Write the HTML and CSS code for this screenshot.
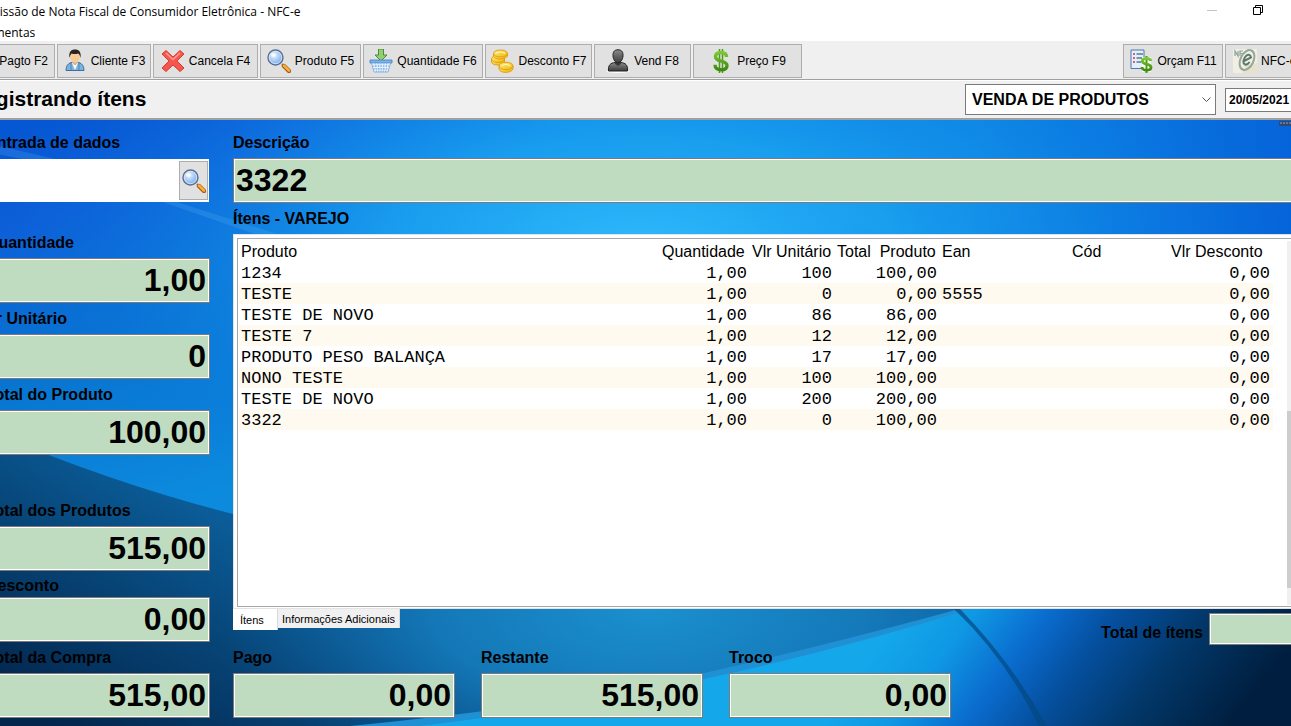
FILE: index.html
```
<!DOCTYPE html>
<html lang="pt-BR">
<head>
<meta charset="utf-8">
<title>Emissão de Nota Fiscal de Consumidor Eletrônica - NFC-e</title>
<link rel="stylesheet" href="styles.css">
</head>
<body>
<svg class="defs" width="0" height="0" aria-hidden="true">
  <defs>
    <radialGradient id="lens" cx=".4" cy=".35" r=".7"><stop offset="0" stop-color="#e8f4ff"/><stop offset=".5" stop-color="#a9cdf5"/><stop offset="1" stop-color="#6fa3e4"/></radialGradient>
    <linearGradient id="coin" x1="0" y1="0" x2="1" y2="1"><stop offset="0" stop-color="#fff08a"/><stop offset="1" stop-color="#f5b400"/></linearGradient>
    <linearGradient id="bust" x1="0" y1="0" x2="0" y2="1"><stop offset="0" stop-color="#8a8a8a"/><stop offset="1" stop-color="#3c3c3c"/></linearGradient>
    <linearGradient id="money" x1="0" y1="0" x2="0" y2="1"><stop offset="0" stop-color="#7cc832"/><stop offset="1" stop-color="#3d8a10"/></linearGradient>
    <symbol id="i-lens" viewBox="0 0 24 24">
      <path d="M15 15l3 3" stroke="#777" stroke-width="2"/>
      <path d="M17 17l5 5" stroke="#a55a10" stroke-width="4.4" stroke-linecap="round"/>
      <path d="M17 16.600l5 5" stroke="#f8b23c" stroke-width="2.600" stroke-linecap="round"/>
      <circle cx="8.500" cy="8.500" r="7.500" fill="url(#lens)" stroke="#5d6f92" stroke-width="1.400"/>
      <circle cx="8.500" cy="8.500" r="6.200" fill="none" stroke="#dcebff" stroke-width=".8"/>
      <ellipse cx="6.500" cy="6" rx="2.600" ry="2" fill="#fff" opacity=".75"/>
    </symbol>
    <symbol id="i-client" viewBox="0 0 24 24">
      <path d="M3 21.500c0-4.500 2-7 5-8l4 1.500 4-1.500c3 1 5 3.500 5 8z" fill="#7db3dc" stroke="#3a6fa0"/>
      <path d="M9 14l3 7 3-7z" fill="#fff"/><path d="M8 14v7M16 14v7" stroke="#4c87b8" stroke-width="1"/>
      <path d="M10 11h4v4l-2 1.500-2-1.500z" fill="#e9b27c"/>
      <ellipse cx="12" cy="8" rx="4.800" ry="5.500" fill="#f7cb98"/>
      <path d="M6.500 9C5.500 3 8 .5 12 .5S18.500 3 17.500 9c-.7-3-1.400-4-2.300-4.500-2 .8-5 .8-6.600 0-.8.7-1.500 2-2.100 4.500z" fill="#2b2320"/>
    </symbol>
    <symbol id="i-cancel" viewBox="0 0 24 24">
      <path d="M5 1.500l7 6.500 7-6.500 4 3.500-7 7 7 7-4 3.500-7-6.500-7 6.500L1 19l7-7-7-7z" fill="#f4574d" stroke="#d63a34"/>
      <path d="M5 4l7 6.500L19 4" fill="none" stroke="#ff9c90" stroke-width="1.500"/>
    </symbol>
    <symbol id="i-basket" viewBox="0 0 24 24">
      <path d="M9.500 0h5v6h3.500l-6 6-6-6h3.500z" fill="#92cf74" stroke="#4c8a38"/>
      <path d="M1 11h22v3H1z" fill="#7cb5ea" stroke="#3c7cc0" stroke-width=".8"/>
      <path d="M2.500 14h19l-2.500 9H5z" fill="#eaf4ff" stroke="#6fa5dc" stroke-width=".8"/>
      <path d="M4 17h16M4.500 20h15M6 14l1.500 9M9 14l.8 9M12 14v9M15 14l-.8 9M18 14l-1.500 9" stroke="#7fb0e2" stroke-width="1" stroke-dasharray="1.500 1"/>
    </symbol>
    <symbol id="i-coins" viewBox="0 0 24 24">
      <g fill="url(#coin)" stroke="#d99a10" stroke-width=".9">
        <path d="M1.500 10v3c1 4 11 4 13 0v-3z"/><ellipse cx="8" cy="10" rx="6.500" ry="3.500"/>
        <path d="M3.500 4.500V7c1 4 12 4 14 0V4.500z"/><ellipse cx="10.500" cy="4.500" rx="7" ry="3.500"/>
        <path d="M9 17v3c1 4.500 12 4.500 14 0v-3z"/><ellipse cx="16" cy="17" rx="7" ry="3.800"/>
      </g>
      <path d="M6 4.500c1-2 7-2 9 0M12 17c1-2 6-2 8 0" fill="none" stroke="#fffac8" stroke-width="1.200"/>
    </symbol>
    <symbol id="i-seller" viewBox="0 0 24 24">
      <ellipse cx="12" cy="22.500" rx="11.500" ry="1.500" fill="#fff"/>
      <path d="M2.500 22c-.5-6 2-8 6.500-8.500h6c4.500.5 7 2.500 6.500 8.500z" fill="url(#bust)" stroke="#222"/>
      <path d="M9 12h6v3l-3 2-3-2z" fill="#3a3a3a"/>
      <path d="M12 .8c4 0 5.200 2.500 5 6-.2 4-2.500 7-5 7s-4.800-3-5-7c-.2-3.500 1-6 5-6z" fill="url(#bust)" stroke="#222"/>
    </symbol>
    <symbol id="i-dollar" viewBox="0 0 24 24">
      <path d="M10.500 0v24M13.500 0v24" stroke="#4b9a1c" stroke-width="1.500"/>
      <path d="M17.500 8c0-3.500-2.200-4.500-5.500-4.500S6.500 5 6.500 7.800c0 5.600 11.500 3 11.500 8.600 0 3-2.700 4.300-6 4.300s-6-1-6-4.900" fill="none" stroke="url(#money)" stroke-width="3.400"/>
    </symbol>
    <symbol id="i-budget" viewBox="0 0 24 24">
      <path d="M2 1h13v18.500H2z" fill="#e4effb" stroke="#4b79ae"/>
      <path d="M4 5h2M4 9h2M4 13h2" stroke="#bf3b4a" stroke-width="1.500"/><path d="M7.500 5H14M7.500 9H14M7.500 13H12" stroke="#5e7896" stroke-width="1.300"/>
      <path d="M13 8h9v15h-9z" fill="#fff"/>
      <path d="M17.500 7v17" stroke="#4b9a1c" stroke-width="2"/>
      <path d="M21.800 12c-.5-2-2-2.500-4.200-2.500s-4.200.8-4.200 2.700c0 3.800 8.600 2 8.600 6 0 2-2 3-4.400 3s-4.400-.8-4.600-3.200" fill="none" stroke="url(#money)" stroke-width="2.800"/>
    </symbol>
    <symbol id="i-nfe" viewBox="0 0 24 24">
      <path d="M0 0h24v24H0z" fill="#f2efe2"/>
      <path d="M13 17l11-3v10H9z" fill="#e6e3c8"/>
      <path d="M2 7V2l3 5V2M7 7V2h3M7 4.500h3" fill="none" stroke="#8aa29c" stroke-width="1.200"/>
      <ellipse cx="14" cy="11" rx="6.500" ry="10.500" transform="rotate(25 14 11)" fill="none" stroke="#94a89e" stroke-width="2"/>
      <path d="M11 12l7-3.500c-.5-3-2.500-3.500-4.500-2-3 2.500-4.300 8-1.500 9 1.800.5 3.500-.8 4.600-2.500" fill="none" stroke="#5c7a6c" stroke-width="2"/>
    </symbol>
  </defs>
</svg>

<div class="window">
  <header class="titlebar">
    <span class="caption">Emissão de Nota Fiscal de Consumidor Eletrônica - NFC-e</span>
    <div class="controls">
      <button class="control" aria-label="Minimizar"><svg width="10" height="10"><path d="M0 5.500h10" stroke="#c4c4c4"/></svg></button>
      <button class="control" aria-label="Restaurar"><svg width="10" height="10" fill="none" stroke="#000"><path d="M.5 2.500h7v7h-7zM2.500 2.500v-2h7v7h-2"/></svg></button>
      <button class="control" aria-label="Fechar"><svg width="10" height="10" stroke="#000"><path d="M0 0l10 10M10 0L0 10"/></svg></button>
    </div>
  </header>
  <nav class="menubar"><a class="menu" href="#">Ferramentas</a></nav>

  <div class="toolbar">
    <button class="tool tool-pay">Pagto F2</button>
    <button class="tool tool-client"><svg class="icon"><use href="#i-client"/></svg>Cliente F3</button>
    <button class="tool tool-cancel"><svg class="icon"><use href="#i-cancel"/></svg>Cancela F4</button>
    <button class="tool tool-product"><svg class="icon"><use href="#i-lens"/></svg>Produto F5</button>
    <button class="tool tool-qty"><svg class="icon"><use href="#i-basket"/></svg>Quantidade F6</button>
    <button class="tool tool-discount"><svg class="icon"><use href="#i-coins"/></svg>Desconto F7</button>
    <button class="tool tool-seller"><svg class="icon"><use href="#i-seller"/></svg>Vend F8</button>
    <button class="tool tool-price"><svg class="icon"><use href="#i-dollar"/></svg>Preço F9</button>
    <button class="tool tool-budget"><svg class="icon"><use href="#i-budget"/></svg>Orçam F11</button>
    <button class="tool tool-nfce"><svg class="icon"><use href="#i-nfe"/></svg>NFC-e</button>
  </div>

  <div class="statusbar">
    <h1 class="status">Registrando ítens</h1>
    <select class="operation" aria-label="Operação"><option>VENDA DE PRODUTOS</option></select>
    <input class="date" aria-label="Data" value="20/05/2021">
  </div>

  <main class="sale">
    <svg class="backdrop" viewBox="-36 120 1363 606" preserveAspectRatio="none" aria-hidden="true">
      <defs>
        <linearGradient id="sky" gradientUnits="userSpaceOnUse" x1="0" y1="120" x2="120" y2="520"><stop offset="0" stop-color="#0556d2"/><stop offset=".25" stop-color="#0d5fd8"/><stop offset=".6" stop-color="#0874d0"/><stop offset="1" stop-color="#0c8ade"/></linearGradient>
        <linearGradient id="east" gradientUnits="userSpaceOnUse" x1="233" y1="0" x2="1291" y2="0"><stop offset="0" stop-color="#0a6ee0" stop-opacity="0"/><stop offset=".3" stop-color="#0c84e8"/><stop offset=".7" stop-color="#0a80e4"/><stop offset="1" stop-color="#045cd8"/></linearGradient>
        <radialGradient id="glow" gradientUnits="userSpaceOnUse" cx="0" cy="0" r="1" gradientTransform="translate(640 250) scale(640 280)"><stop offset="0" stop-color="#2fbafa"/><stop offset=".4" stop-color="#1aa0f0" stop-opacity=".9"/><stop offset="1" stop-color="#0a70e0" stop-opacity="0"/></radialGradient>
        <linearGradient id="deep" gradientUnits="userSpaceOnUse" x1="60" y1="726" x2="230" y2="440"><stop offset="0" stop-color="#03264d"/><stop offset=".45" stop-color="#074476"/><stop offset="1" stop-color="#0d6cae"/></linearGradient>
        <radialGradient id="teal" gradientUnits="userSpaceOnUse" cx="0" cy="0" r="1" gradientTransform="translate(650 610) scale(430 190)"><stop offset="0" stop-color="#1b90ce"/><stop offset=".5" stop-color="#167cbc" stop-opacity=".85"/><stop offset="1" stop-color="#0c5a98" stop-opacity="0"/></radialGradient>
        <linearGradient id="wave" gradientUnits="userSpaceOnUse" x1="910" y1="600" x2="1170" y2="800"><stop offset="0" stop-color="#14a8ea"/><stop offset=".18" stop-color="#0f98e4"/><stop offset=".36" stop-color="#0a6cce"/><stop offset=".52" stop-color="#0550a0"/><stop offset=".74" stop-color="#02386a"/><stop offset="1" stop-color="#001f40"/></linearGradient>
      </defs>
      <path d="M-36 120h1363v606H-36z" fill="url(#sky)"/>
      <path d="M233 120h1094v400H233z" fill="url(#east)"/>
      <path d="M-36 120h1363v420H-36z" fill="url(#glow)"/>
      <path d="M540 120q90 30 135 40l135 43 70 31h447V120z" fill="#20b0f0" opacity=".1"/>
      <path d="M-36 138L60 160 180 203 290 238h-24L180 208 60 167-36 147z" fill="#5ab4f0" opacity=".22"/>
      <path d="M-36 420Q100 480 233 514L600 560H1000V726H-36z" fill="url(#deep)"/>
      <path d="M220 560H1010V726H220z" fill="url(#teal)"/>
      <path d="M350 726Q560 706 704 673 840 642 974 605H1327V726z" fill="#2090d4"/>
      <path d="M420 726Q570 708 704 679 840 650 984 605H1327V726z" fill="url(#wave)"/>
      <path d="M954 609Q1005 657 1039 726h8Q1010 660 960 609z" fill="#034880" opacity=".7"/>
      <path d="M1279 121h40v5h-40z" fill="#34486c"/><path d="M1280 123h38" stroke="#93a3ba" stroke-dasharray="2 1"/>
    </svg>

    <section class="entry">
      <div class="group">
        <label class="label" for="entrada">Entrada de dados</label>
        <div class="search"><input class="search-input" id="entrada"><button class="search-button" aria-label="Pesquisar"><svg class="icon"><use href="#i-lens"/></svg></button></div>
      </div>
      <div class="group">
        <label class="label" for="qtd">Quantidade</label><input class="field amount" id="qtd" value="1,00" readonly>
        <label class="label" for="unit">Vr Unitário</label><input class="field amount" id="unit" value="0" readonly>
        <label class="label" for="totprod">Total do Produto</label><input class="field amount" id="totprod" value="100,00" readonly>
      </div>
      <div class="group group-totals">
        <label class="label" for="totprods">Total dos Produtos</label><input class="field amount" id="totprods" value="515,00" readonly>
        <label class="label label-tight" for="desc">Desconto</label><input class="field amount" id="desc" value="0,00" readonly>
        <label class="label" for="compra">Total da Compra</label><input class="field amount" id="compra" value="515,00" readonly>
      </div>
    </section>

    <section class="detail">
      <label class="label" for="descricao">Descrição</label>
      <input class="field" id="descricao" value="3322" readonly>
      <h2 class="label">Ítens - VAREJO</h2>
      <div class="panel">
        <div class="grid">
          <table class="items">
            <colgroup><col><col class="c-qty"><col class="c-unit"><col class="c-total"><col class="c-ean"><col class="c-code"><col class="c-disc"></colgroup>
            <thead><tr><th>Produto</th><th>Quantidade</th><th>Vlr Unitário</th><th>Total&nbsp; Produto</th><th>Ean</th><th>Cód</th><th>Vlr Desconto</th></tr></thead>
            <tbody>
              <tr><td>1234</td><td class="num">1,00</td><td class="num">100</td><td class="num">100,00</td><td></td><td></td><td class="num">0,00</td></tr>
              <tr><td>TESTE</td><td class="num">1,00</td><td class="num">0</td><td class="num">0,00</td><td>5555</td><td></td><td class="num">0,00</td></tr>
              <tr><td>TESTE DE NOVO</td><td class="num">1,00</td><td class="num">86</td><td class="num">86,00</td><td></td><td></td><td class="num">0,00</td></tr>
              <tr><td>TESTE 7</td><td class="num">1,00</td><td class="num">12</td><td class="num">12,00</td><td></td><td></td><td class="num">0,00</td></tr>
              <tr><td>PRODUTO PESO BALANÇA</td><td class="num">1,00</td><td class="num">17</td><td class="num">17,00</td><td></td><td></td><td class="num">0,00</td></tr>
              <tr><td>NONO TESTE</td><td class="num">1,00</td><td class="num">100</td><td class="num">100,00</td><td></td><td></td><td class="num">0,00</td></tr>
              <tr><td>TESTE DE NOVO</td><td class="num">1,00</td><td class="num">200</td><td class="num">200,00</td><td></td><td></td><td class="num">0,00</td></tr>
              <tr><td>3322</td><td class="num">1,00</td><td class="num">0</td><td class="num">100,00</td><td></td><td></td><td class="num">0,00</td></tr>
            </tbody>
          </table>
          <div class="scrollbar"><div class="thumb"></div></div>
        </div>
      </div>
      <div class="footer">
        <div class="summary">
          <div class="tabs"><button class="tab tab-active">Ítens</button><button class="tab">Informações Adicionais</button></div>
          <div class="payments">
            <div class="payment"><label class="label" for="pago">Pago</label><input class="field amount" id="pago" value="0,00" readonly></div>
            <div class="payment"><label class="label" for="restante">Restante</label><input class="field amount" id="restante" value="515,00" readonly></div>
            <div class="payment"><label class="label" for="troco">Troco</label><input class="field amount" id="troco" value="0,00" readonly></div>
          </div>
        </div>
        <div class="count"><label class="count-label" for="total">Total de ítens</label><input class="field count-field" id="total" readonly></div>
      </div>
    </section>
  </main>
</div>
</body>
</html>
```
FILE: styles.css
```
* { box-sizing: border-box; }

body {
  margin: 0;
  overflow: hidden;
  background: #fff;
  color: #000;
  font-family: "Liberation Sans", Arial, sans-serif;
}

.defs { position: absolute; }

button, input, select {
  margin: 0;
  font-family: inherit;
  color: inherit;
  border-radius: 0;
}

/* The maximised window is wider than the visible area on both sides. */
.window {
  margin: 0 -36px;
  min-height: 100vh;
  display: flex;
  flex-direction: column;
}

.titlebar {
  display: flex;
  justify-content: space-between;
  height: 24px;
  padding-left: 18px;
  font: 12px/24px "Open Sans", "Noto Sans", sans-serif;
}

.controls { display: flex; height: 20px; }

.control {
  display: grid;
  place-items: center;
  width: 46px;
  padding: 0;
  border: 0;
  background: none;
}

.menubar {
  height: 17px;
  font: 12px/17px "Open Sans", "Noto Sans", sans-serif;
}

.menu { color: inherit; text-decoration: none; }

.toolbar {
  display: flex;
  gap: 2px;
  height: 39px;
  padding: 3px 0 1px 12px;
  background: #f0f0f0;
  border-bottom: 1px solid #a0a0a0;
}

.tool {
  display: flex;
  align-items: center;
  justify-content: center;
  gap: 4px;
  padding: 0;
  border: 1px solid #adadad;
  background: #e1e1e1;
  font-size: 12px;
  white-space: nowrap;
}

.icon { width: 24px; height: 24px; flex: none; }

.tool-pay { width: 79px; justify-content: flex-end; padding-right: 6px; }
.tool-client { width: 94px; }
.tool-cancel { width: 105px; }
.tool-product { width: 101px; }
.tool-qty { width: 120px; }
.tool-discount { width: 107px; }
.tool-seller { width: 97px; }
.tool-price { width: 109px; }
.tool-budget { width: 100px; margin-left: auto; }
.tool-nfce { width: 90px; margin-right: 12px; padding-left: 7px; justify-content: flex-start; }

.statusbar {
  display: flex;
  align-items: center;
  height: 40px;
  padding: 0 12px 0 5px;
  background: #f0f0f0;
  border-top: 1px solid #fff;
  border-bottom: 2px solid #a0a0a0;
}

.status { margin: 0 auto 0 0; padding-bottom: 2px; font-size: 21px; line-height: 24px; }

.operation {
  width: 251px;
  height: 31px;
  padding: 0 6px;
  border: 1px solid #7a7a7a;
  appearance: none;
  background: #fff url("data:image/svg+xml,%3Csvg xmlns='http://www.w3.org/2000/svg' width='9' height='6'%3E%3Cpath d='M.5.500l4 4 4-4' fill='none' stroke='%23555'/%3E%3C/svg%3E") no-repeat right 4px center;
  font-size: 16px;
  font-weight: bold;
}

.date {
  width: 90px;
  height: 24px;
  margin-left: 9px;
  padding: 0 3px;
  border: 1px solid #7a7a7a;
  background: #fff;
  font-size: 12px;
  font-weight: bold;
}

.sale {
  position: relative;
  flex: 1;
  display: flex;
  gap: 23px;
  padding: 7px 24px 8px;
}

.backdrop {
  position: absolute;
  inset: 0;
  z-index: -1;
  width: 100%;
  height: 100%;
}

.entry {
  display: flex;
  flex-direction: column;
  gap: 24px;
  width: 222px;
  flex: none;
}

.group { display: flex; flex-direction: column; }
.group-totals { margin-top: 16px; }

.label {
  margin: 0;
  font-size: 16px;
  font-weight: bold;
  line-height: 31px;
}

.entry .label { margin-left: -2px; }

.label-tight { padding-top: 4px; line-height: 22px; }

.field {
  width: 100%;
  height: 45px;
  padding: 0 2px;
  border: 1px solid #7b7b7b;
  box-shadow: inset 0 0 0 1px #fff;
  background: #c0dcc0;
  font-size: 32px;
  font-weight: bold;
}

.amount { padding-right: 3px; text-align: right; }

.search {
  display: flex;
  height: 45px;
  padding: 2px 1px 2px 2px;
  border: 1px solid transparent;
  background: #fff;
  background-clip: padding-box;
}

.search-input { flex: 1; min-width: 0; border: 0; font-size: 32px; font-weight: bold; }

.search-button {
  display: grid;
  place-items: center;
  width: 29px;
  padding: 0;
  border: 1px solid #adadad;
  background: #e1e1e1;
}

.detail { flex: 1; min-width: 0; display: flex; flex-direction: column; }

.panel {
  flex: 1;
  display: flex;
  min-height: 375px;
  padding: 3px 0 1px 3px;
  border: 1px solid #e3e3e3;
  border-right: 0;
  background: #fff;
}

.grid {
  flex: 1;
  display: flex;
  align-items: flex-start;
  gap: 14px;
  padding: 2px 0 1px 1px;
  border: 1px solid #a5a5ac;
  border-right: 0;
}

.items {
  flex: 1;
  min-width: 0;
  table-layout: fixed;
  border-collapse: collapse;
}

.c-qty { width: 90px; }
.c-unit { width: 85px; }
.c-total { width: 105px; }
.c-ean { width: 130px; }
.c-code { width: 99px; }
.c-disc { width: 104px; }

.items th, .items td {
  height: 21px;
  padding: 0 3px 0 2px;
  line-height: 21px;
  text-align: left;
  white-space: nowrap;
}

.items th { padding-right: 0; font-size: 16px; font-weight: normal; }

.items td {
  padding-top: 2px;
  font-family: "Liberation Mono", "Courier New", monospace;
  font-size: 17px;
  line-height: 19px;
}

.items .num { text-align: right; }
.items tbody tr:nth-child(even) { background: #fffaf0; }

.scrollbar {
  align-self: stretch;
  width: 16px;
  background: #f0f0f0;
  padding-top: 170px;
}

.thumb { height: 177px; background: #cdcdcd; }

.footer { display: flex; justify-content: space-between; align-items: flex-start; }

.tabs { display: flex; align-items: flex-start; height: 33px; }

.tab {
  height: 19px;
  padding: 0 4px;
  border: 0;
  border-right: 1px solid #d9d9d9;
  background: #f0f0f0;
  font-size: 11px;
}

.tab-active { width: 45px; height: 21px; padding: 0 7px; background: #fff; text-align: left; }

.payments { display: flex; gap: 26px; }
.payment { display: flex; flex-direction: column; width: 222px; }

.count { display: flex; align-items: flex-start; gap: 6px; margin-top: 4px; }
.count-label { padding-top: 4px; font-size: 16px; font-weight: bold; line-height: 32px; white-space: nowrap; }
.count-field { width: 94px; height: 32px; }
```
